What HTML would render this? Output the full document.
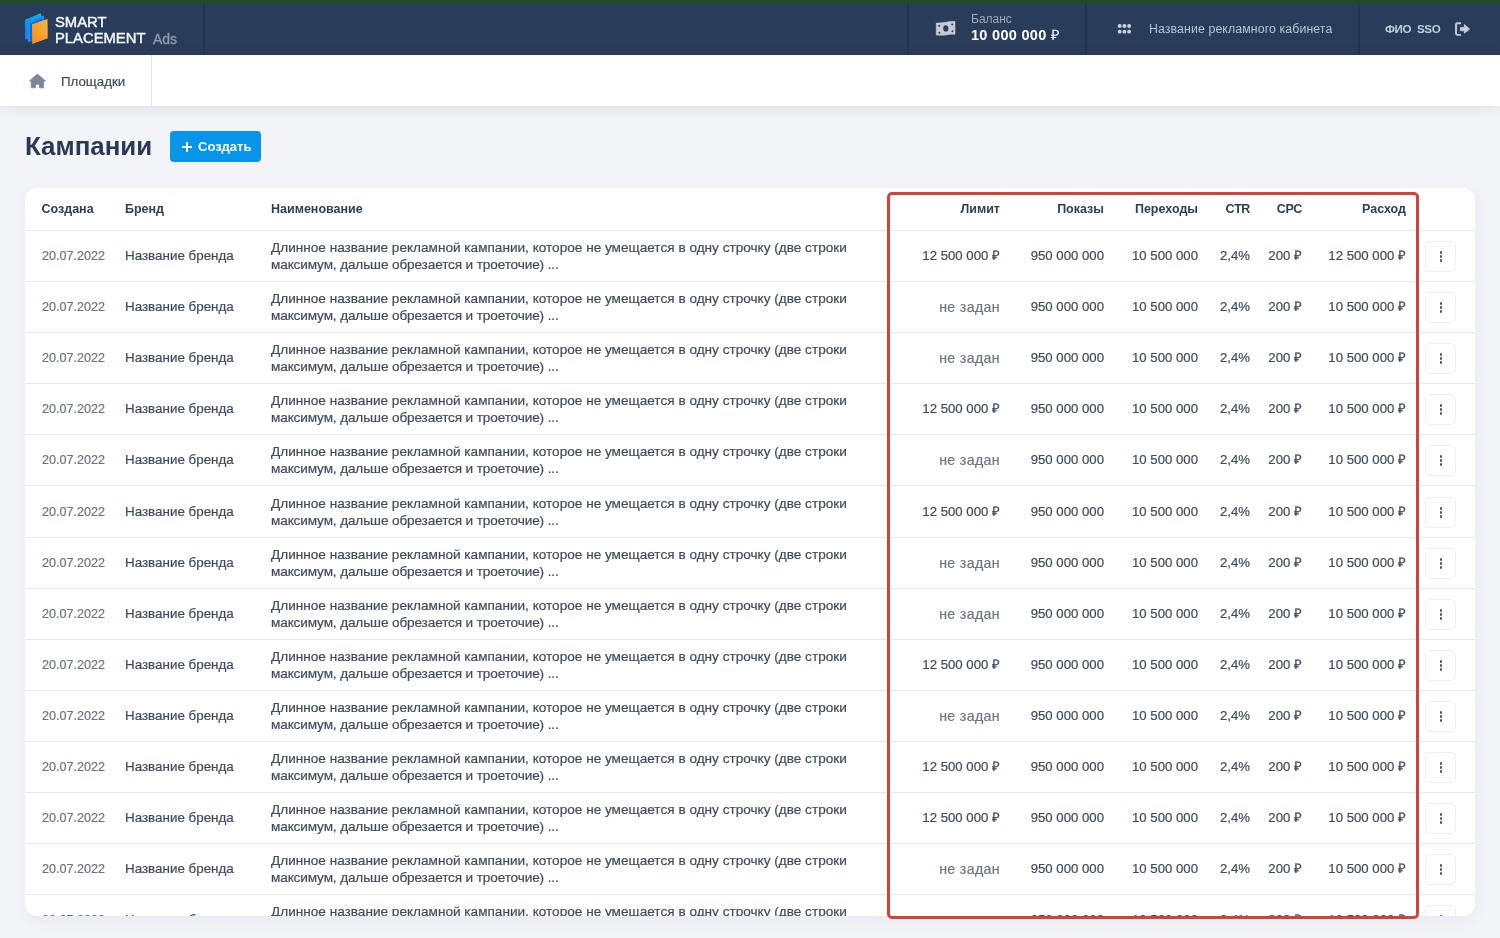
<!DOCTYPE html>
<html lang="ru"><head><meta charset="utf-8"><title>Кампании</title>
<style>
*{box-sizing:border-box;margin:0;padding:0}
html,body{width:1500px;height:938px;overflow:hidden}
body{position:relative;background:#f2f4f8;font-family:"Liberation Sans",sans-serif;color:#3b4657}
.wrap{position:absolute;left:0;top:0;width:1500px;height:938px;will-change:transform}
.green{position:absolute;left:0;top:0;width:1500px;height:4px;background:#214b27}
.hdr{position:absolute;left:0;top:4px;width:1500px;height:51px;background:#293c59}
.vd{position:absolute;top:4px;width:2px;height:51px;background:#223350}
.logo{position:absolute;left:22px;top:10px}
.lt{position:absolute;color:#f4f7fb;font-weight:normal;-webkit-text-stroke:0.45px #f4f7fb;font-size:14.8px;line-height:16px;white-space:nowrap;letter-spacing:0px}
.ads{position:absolute;color:#8f9db3;font-size:14px;line-height:16px;-webkit-text-stroke:0.3px #8f9db3}
.bal-l{position:absolute;left:971px;top:12px;font-size:12px;line-height:14px;color:#9aa7b9}
.bal-v{position:absolute;left:971px;top:27px;font-size:14.5px;line-height:17px;color:#fff;font-weight:bold;letter-spacing:0.3px;white-space:nowrap}
.cab{position:absolute;left:1149px;top:21.5px;letter-spacing:0.12px;font-size:12.3px;line-height:14px;color:#b9c4d3;white-space:nowrap}
.fio{position:absolute;left:1385px;top:21.5px;letter-spacing:-0.35px;font-size:11.6px;line-height:14px;color:#c3cdda;font-weight:bold;white-space:nowrap}
.bc{position:absolute;left:0;top:55px;width:1500px;height:51px;background:#fff;box-shadow:0 2px 14px rgba(40,55,80,.10)}
.bcd{position:absolute;left:151px;top:55px;width:1px;height:51px;background:#e4e7ec}
.bct{position:absolute;left:61px;top:73px;font-size:13.3px;line-height:17px;color:#404b5c;-webkit-text-stroke:0.2px #404b5c}
h1{position:absolute;left:25px;top:131px;font-size:25.9px;line-height:30px;color:#2a3a54;font-weight:bold;white-space:nowrap}
.btn{position:absolute;left:170px;top:131px;width:91px;height:31px;background:#0795e9;border-radius:4px;color:#fff;font-weight:bold;font-size:13px;line-height:31px;white-space:nowrap}
.pl1{position:absolute;left:12px;top:15.4px;width:10px;height:1.7px;background:#fff}
.pl2{position:absolute;left:16.15px;top:11px;width:1.7px;height:10px;background:#fff}
.btn b{position:absolute;left:28px;top:0}
.card{position:absolute;left:25px;top:188px;width:1450px;height:728.4px;background:#fff;border-radius:12px;overflow:hidden;box-shadow:0 5px 14px rgba(60,80,130,.06)}
.th{position:absolute;top:13px;font-weight:bold;font-size:12.5px;line-height:17px;color:#2f3d55;white-space:nowrap}
.thr{text-align:right}
.hb{position:absolute;left:0;top:41.5px;width:1450px;height:1px;background:#e5e8ee}
.row{position:absolute;left:0;width:1450px;height:51px}
.row::after{content:"";position:absolute;left:0;top:51px;width:1450px;height:1px;background:#e5e8ee}
.c{position:absolute;top:16.6px;font-size:13.2px;line-height:17px;white-space:nowrap;color:#404b5c;-webkit-text-stroke:0.2px #404b5c}
.date{left:17px;top:18px;color:#6c7584;-webkit-text-stroke:0.2px #6c7584;font-size:12.6px}
.brand{left:100px;font-size:13.4px}
.name{position:absolute;left:246px;top:9px;font-size:13.6px;line-height:17px;white-space:nowrap;color:#404b5c;-webkit-text-stroke:0.2px #404b5c}
.l2{letter-spacing:-0.13px}
.lim{right:475px;text-align:right}
.nz{color:#6c7584;-webkit-text-stroke:0.2px #6c7584;font-size:14.2px;letter-spacing:0.35px;top:17.5px}
.r2{right:371px}
.r3{right:277px}
.r4{right:225px}
.r5{right:173px}
.r6{right:69px}
.keb{position:absolute;left:1400px;top:11px;width:31px;height:31px;border:1px solid #eceef2;border-radius:5px}
.keb i{position:absolute;left:13.7px;width:2.7px;height:2.7px;border-radius:50%;background:#4d5566}
.keb i:nth-child(1){top:9px}
.keb i:nth-child(2){top:13px}
.keb i:nth-child(3){top:17px}
.red{position:absolute;left:887px;top:191.8px;width:532px;height:727.5px;border:3.3px solid #d3423a;border-radius:5px}
</style></head><body><div class="wrap">
<div class="green"></div>
<div class="hdr"></div>
<div class="vd" style="left:203px"></div>
<div class="vd" style="left:907px"></div>
<div class="vd" style="left:1085px"></div>
<div class="vd" style="left:1358px"></div>
<svg class="logo" width="30" height="38" viewBox="22 10 30 38">
<defs><linearGradient id="bl" x1="0" y1="1" x2="1" y2="0"><stop offset="0" stop-color="#1877ee"/><stop offset="1" stop-color="#13b3f0"/></linearGradient>
<linearGradient id="or" x1="0" y1="1" x2="1" y2="0"><stop offset="0" stop-color="#f88d14"/><stop offset="1" stop-color="#f5b84a"/></linearGradient></defs>
<path d="M25.5 19.6 L40.2 13.4 Q41.2 13.1 41.2 14.2 L41.2 33 L26.8 39.6 Q25 40.2 25 38.6 L25 20.5 Q25 19.8 25.5 19.6 Z" fill="url(#bl)"/>
<path d="M28.6 21.8 L43.1 15.6 Q44.1 15.3 44.1 16.4 L44.1 35 L29.6 41.8 Q27.9 42.4 27.9 40.8 L27.9 22.7 Q27.9 22 28.6 21.8 Z" fill="#1a8ff0"/>
<path d="M30 23.6 L42.6 18.2 L42.6 35 L30 40.6 Z" fill="#0c6ad8"/>
<path d="M32 24.3 L47.5 19 L47.8 38.3 L32.2 43.9 Z" fill="url(#or)"/>
<path d="M32.5 27 L40 33.5 L47.5 30" fill="none" stroke="#f9a632" stroke-width="0.6" opacity="0.5"/>
</svg>
<div class="lt" style="left:55px;top:14px">SMART</div>
<div class="lt" style="left:55px;top:30px">PLACEMENT</div>
<div class="ads" style="left:153px;top:31px">Ads</div>
<svg style="position:absolute;left:935px;top:20px" width="22" height="17" viewBox="0 0 22 17">
<path d="M1.2 3.1 C5 2.7 8 2.8 11 2.2 C14 1.5 17 1.2 20 1.3 L20 14.3 C17 14.1 14 14.3 11 14.9 C8 15.5 5 15.2 1.2 15 Z" fill="#c5ccd7" stroke="#c5ccd7" stroke-width="0.5" stroke-linejoin="round"/>
<ellipse cx="10.8" cy="8.4" rx="2.6" ry="3.1" fill="#293c59"/>
<circle cx="4.3" cy="5.8" r="1" fill="#293c59"/><circle cx="17.2" cy="4.4" r="1" fill="#293c59"/>
<circle cx="4.4" cy="12.8" r="1" fill="#293c59"/><circle cx="17.5" cy="11.2" r="1" fill="#293c59"/>
</svg>
<div class="bal-l">Баланс</div>
<div class="bal-v">10 000 000 <span style="font-weight:normal">₽</span></div>
<svg style="position:absolute;left:1117px;top:24px" width="15" height="10" viewBox="0 0 15 10">
<g fill="#c6cfdb"><rect x="0.8" y="0.1" width="3.8" height="3.8" rx="1.6"/><rect x="5.5" y="0.1" width="3.8" height="3.8" rx="1.6"/><rect x="10.2" y="0.1" width="3.8" height="3.8" rx="1.6"/>
<rect x="0.8" y="5.7" width="3.8" height="3.8" rx="1.6"/><rect x="5.5" y="5.7" width="3.8" height="3.8" rx="1.6"/><rect x="10.2" y="5.7" width="3.8" height="3.8" rx="1.6"/></g>
</svg>
<div class="cab">Название рекламного кабинета</div>
<div class="fio">ФИО&nbsp; SSO</div>
<svg style="position:absolute;left:1454px;top:22px" width="17" height="14" viewBox="0 0 17 14">
<path d="M6.3 1.3 H3.4 Q2 1.3 2 2.7 V11.5 Q2 12.9 3.4 12.9 H6.3" fill="none" stroke="#c3cdda" stroke-width="1.9" stroke-linecap="round"/>
<path d="M6.4 5.6 H10.4 V2.6 L15.6 7.1 L10.4 11.2 V8.7 H6.4 Z" fill="#c3cdda" stroke="#c3cdda" stroke-width="0.9" stroke-linejoin="round"/>
</svg>
<div class="bc"></div>
<div class="bcd"></div>
<svg style="position:absolute;left:28px;top:73px" width="19" height="16" viewBox="0 0 19 16">
<path d="M9.4 1.1 L17.5 7.9 L15.6 7.9 L15.6 14.8 L11.6 14.8 L11.6 12 Q9.5 9.8 7.4 12 L7.4 14.8 L3.2 14.8 L3.2 7.9 L1.4 7.9 Z" fill="#7b8797" stroke="#7b8797" stroke-width="0.8" stroke-linejoin="round"/>
</svg>
<div class="bct">Площадки</div>
<h1>Кампании</h1>
<div class="btn"><i class="pl1"></i><i class="pl2"></i><b>Создать</b></div>
<div class="card">
<div class="th" style="left:16.5px">Создана</div>
<div class="th" style="left:100px">Бренд</div>
<div class="th" style="left:246px">Наименование</div>
<div class="th thr" style="right:475px">Лимит</div>
<div class="th thr" style="right:371px">Показы</div>
<div class="th thr" style="right:277px">Переходы</div>
<div class="th thr" style="right:225px;letter-spacing:-0.4px">CTR</div>
<div class="th thr" style="right:173px;letter-spacing:-0.4px">CPC</div>
<div class="th thr" style="right:69px">Расход</div>
<div class="hb"></div>
<div class="row" style="top:42.00px">
<div class="c date">20.07.2022</div><div class="c brand">Название бренда</div>
<div class="name">Длинное название рекламной кампании, которое не умещается в одну строчку (две строки<br><span class="l2">максимум, дальше обрезается и троеточие) ...</span></div>
<div class="c lim">12 500 000 ₽</div><div class="c r2">950 000 000</div><div class="c r3">10 500 000</div><div class="c r4">2,4%</div><div class="c r5">200 ₽</div><div class="c r6">12 500 000 ₽</div>
<div class="keb"><i></i><i></i><i></i></div>
</div>
<div class="row" style="top:93.00px">
<div class="c date">20.07.2022</div><div class="c brand">Название бренда</div>
<div class="name">Длинное название рекламной кампании, которое не умещается в одну строчку (две строки<br><span class="l2">максимум, дальше обрезается и троеточие) ...</span></div>
<div class="c lim nz">не задан</div><div class="c r2">950 000 000</div><div class="c r3">10 500 000</div><div class="c r4">2,4%</div><div class="c r5">200 ₽</div><div class="c r6">10 500 000 ₽</div>
<div class="keb"><i></i><i></i><i></i></div>
</div>
<div class="row" style="top:144.00px">
<div class="c date">20.07.2022</div><div class="c brand">Название бренда</div>
<div class="name">Длинное название рекламной кампании, которое не умещается в одну строчку (две строки<br><span class="l2">максимум, дальше обрезается и троеточие) ...</span></div>
<div class="c lim nz">не задан</div><div class="c r2">950 000 000</div><div class="c r3">10 500 000</div><div class="c r4">2,4%</div><div class="c r5">200 ₽</div><div class="c r6">10 500 000 ₽</div>
<div class="keb"><i></i><i></i><i></i></div>
</div>
<div class="row" style="top:195.00px">
<div class="c date">20.07.2022</div><div class="c brand">Название бренда</div>
<div class="name">Длинное название рекламной кампании, которое не умещается в одну строчку (две строки<br><span class="l2">максимум, дальше обрезается и троеточие) ...</span></div>
<div class="c lim">12 500 000 ₽</div><div class="c r2">950 000 000</div><div class="c r3">10 500 000</div><div class="c r4">2,4%</div><div class="c r5">200 ₽</div><div class="c r6">10 500 000 ₽</div>
<div class="keb"><i></i><i></i><i></i></div>
</div>
<div class="row" style="top:246.00px">
<div class="c date">20.07.2022</div><div class="c brand">Название бренда</div>
<div class="name">Длинное название рекламной кампании, которое не умещается в одну строчку (две строки<br><span class="l2">максимум, дальше обрезается и троеточие) ...</span></div>
<div class="c lim nz">не задан</div><div class="c r2">950 000 000</div><div class="c r3">10 500 000</div><div class="c r4">2,4%</div><div class="c r5">200 ₽</div><div class="c r6">10 500 000 ₽</div>
<div class="keb"><i></i><i></i><i></i></div>
</div>
<div class="row" style="top:298.00px">
<div class="c date">20.07.2022</div><div class="c brand">Название бренда</div>
<div class="name">Длинное название рекламной кампании, которое не умещается в одну строчку (две строки<br><span class="l2">максимум, дальше обрезается и троеточие) ...</span></div>
<div class="c lim">12 500 000 ₽</div><div class="c r2">950 000 000</div><div class="c r3">10 500 000</div><div class="c r4">2,4%</div><div class="c r5">200 ₽</div><div class="c r6">10 500 000 ₽</div>
<div class="keb"><i></i><i></i><i></i></div>
</div>
<div class="row" style="top:349.00px">
<div class="c date">20.07.2022</div><div class="c brand">Название бренда</div>
<div class="name">Длинное название рекламной кампании, которое не умещается в одну строчку (две строки<br><span class="l2">максимум, дальше обрезается и троеточие) ...</span></div>
<div class="c lim nz">не задан</div><div class="c r2">950 000 000</div><div class="c r3">10 500 000</div><div class="c r4">2,4%</div><div class="c r5">200 ₽</div><div class="c r6">10 500 000 ₽</div>
<div class="keb"><i></i><i></i><i></i></div>
</div>
<div class="row" style="top:400.00px">
<div class="c date">20.07.2022</div><div class="c brand">Название бренда</div>
<div class="name">Длинное название рекламной кампании, которое не умещается в одну строчку (две строки<br><span class="l2">максимум, дальше обрезается и троеточие) ...</span></div>
<div class="c lim nz">не задан</div><div class="c r2">950 000 000</div><div class="c r3">10 500 000</div><div class="c r4">2,4%</div><div class="c r5">200 ₽</div><div class="c r6">10 500 000 ₽</div>
<div class="keb"><i></i><i></i><i></i></div>
</div>
<div class="row" style="top:451.00px">
<div class="c date">20.07.2022</div><div class="c brand">Название бренда</div>
<div class="name">Длинное название рекламной кампании, которое не умещается в одну строчку (две строки<br><span class="l2">максимум, дальше обрезается и троеточие) ...</span></div>
<div class="c lim">12 500 000 ₽</div><div class="c r2">950 000 000</div><div class="c r3">10 500 000</div><div class="c r4">2,4%</div><div class="c r5">200 ₽</div><div class="c r6">10 500 000 ₽</div>
<div class="keb"><i></i><i></i><i></i></div>
</div>
<div class="row" style="top:502.00px">
<div class="c date">20.07.2022</div><div class="c brand">Название бренда</div>
<div class="name">Длинное название рекламной кампании, которое не умещается в одну строчку (две строки<br><span class="l2">максимум, дальше обрезается и троеточие) ...</span></div>
<div class="c lim nz">не задан</div><div class="c r2">950 000 000</div><div class="c r3">10 500 000</div><div class="c r4">2,4%</div><div class="c r5">200 ₽</div><div class="c r6">10 500 000 ₽</div>
<div class="keb"><i></i><i></i><i></i></div>
</div>
<div class="row" style="top:553.00px">
<div class="c date">20.07.2022</div><div class="c brand">Название бренда</div>
<div class="name">Длинное название рекламной кампании, которое не умещается в одну строчку (две строки<br><span class="l2">максимум, дальше обрезается и троеточие) ...</span></div>
<div class="c lim">12 500 000 ₽</div><div class="c r2">950 000 000</div><div class="c r3">10 500 000</div><div class="c r4">2,4%</div><div class="c r5">200 ₽</div><div class="c r6">10 500 000 ₽</div>
<div class="keb"><i></i><i></i><i></i></div>
</div>
<div class="row" style="top:604.00px">
<div class="c date">20.07.2022</div><div class="c brand">Название бренда</div>
<div class="name">Длинное название рекламной кампании, которое не умещается в одну строчку (две строки<br><span class="l2">максимум, дальше обрезается и троеточие) ...</span></div>
<div class="c lim">12 500 000 ₽</div><div class="c r2">950 000 000</div><div class="c r3">10 500 000</div><div class="c r4">2,4%</div><div class="c r5">200 ₽</div><div class="c r6">10 500 000 ₽</div>
<div class="keb"><i></i><i></i><i></i></div>
</div>
<div class="row" style="top:655.00px">
<div class="c date">20.07.2022</div><div class="c brand">Название бренда</div>
<div class="name">Длинное название рекламной кампании, которое не умещается в одну строчку (две строки<br><span class="l2">максимум, дальше обрезается и троеточие) ...</span></div>
<div class="c lim nz">не задан</div><div class="c r2">950 000 000</div><div class="c r3">10 500 000</div><div class="c r4">2,4%</div><div class="c r5">200 ₽</div><div class="c r6">10 500 000 ₽</div>
<div class="keb"><i></i><i></i><i></i></div>
</div>
<div class="row" style="top:706.00px">
<div class="c date">20.07.2022</div><div class="c brand">Название бренда</div>
<div class="name">Длинное название рекламной кампании, которое не умещается в одну строчку (две строки<br><span class="l2">максимум, дальше обрезается и троеточие) ...</span></div>
<div class="c lim nz">не задан</div><div class="c r2">950 000 000</div><div class="c r3">10 500 000</div><div class="c r4">2,4%</div><div class="c r5">200 ₽</div><div class="c r6">10 500 000 ₽</div>
<div class="keb"><i></i><i></i><i></i></div>
</div>
</div>
<div class="red"></div>
</div></body></html>
